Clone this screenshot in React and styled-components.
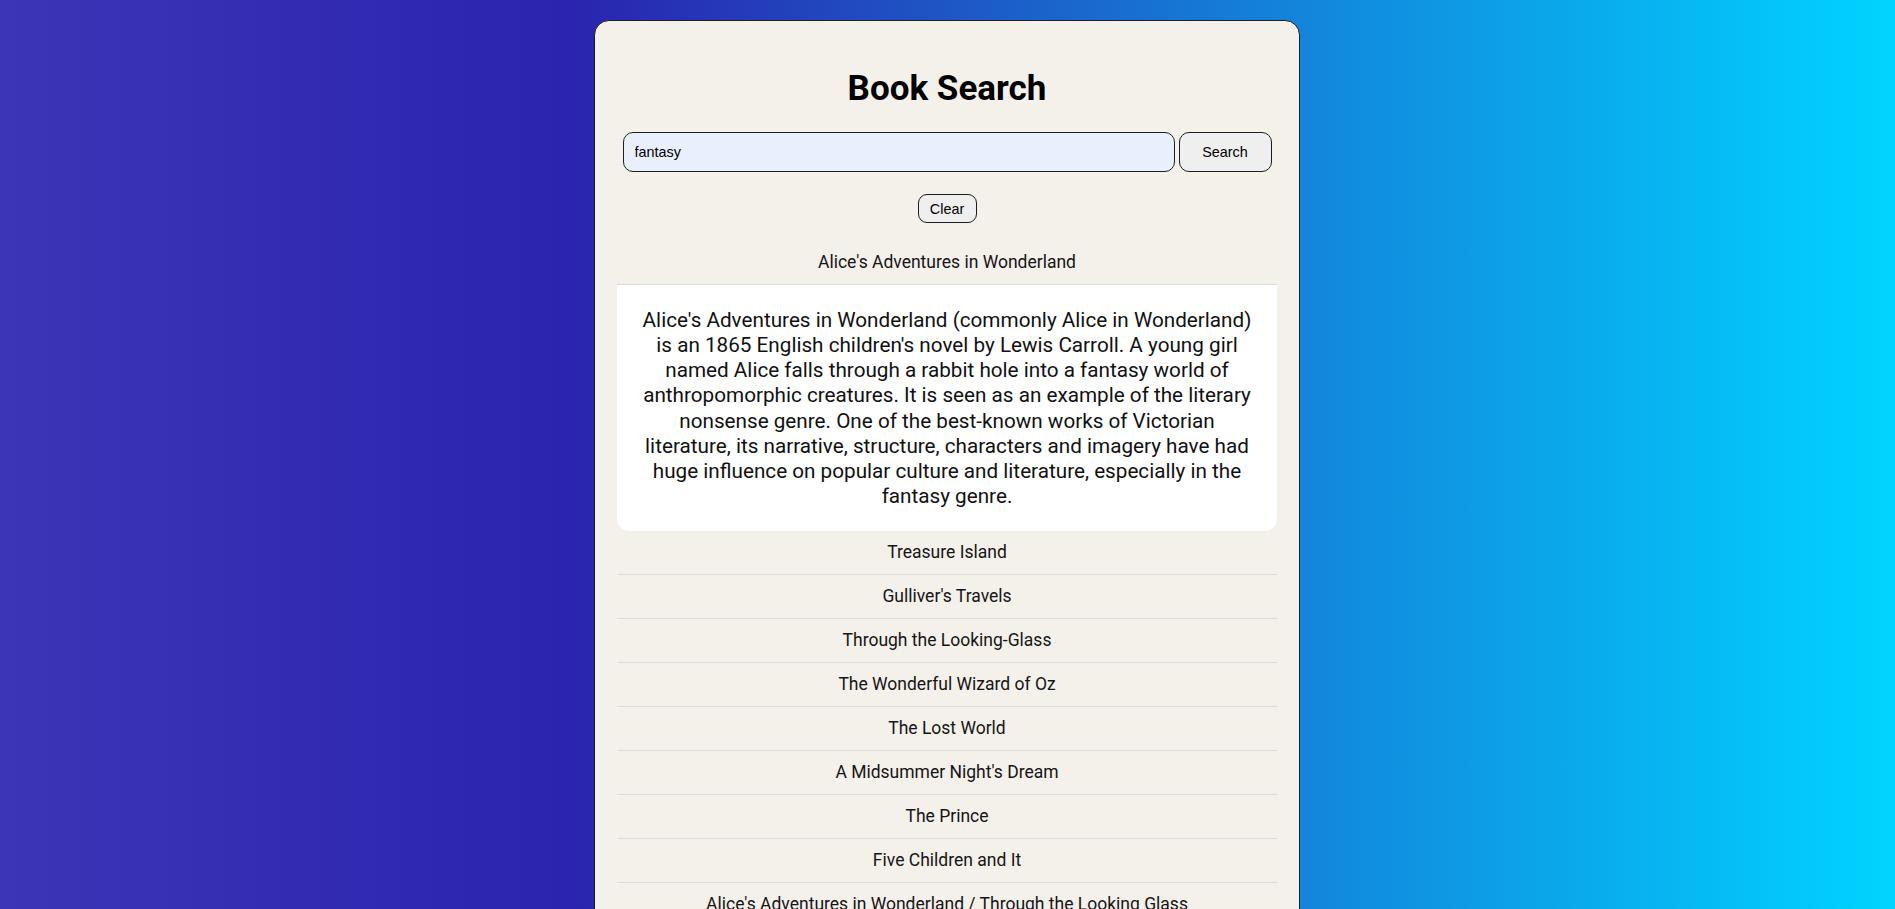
import React, { useState } from "react";
import styled, { createGlobalStyle } from "styled-components";

const GlobalStyle = createGlobalStyle`
  html, body {
    margin: 0;
    padding: 0;
  }
  body {
    min-height: 100vh;
    background: linear-gradient(90deg, #3d35b7 0%, #2a24af 30%, #00d4ff 100%);
    background-attachment: fixed;
    font-family: Roboto, "Liberation Sans", Arial, sans-serif;
    color: #111;
  }
`;

const Page = styled.div`
  display: flex;
  justify-content: center;
  padding: 20px 1px 0 0;
`;

const Card = styled.main`
  width: 660px;
  background: #f4f0ea;
  border: 1px solid #1e1e1e;
  border-radius: 15px;
  padding: 47px 22px 20px;
  display: flex;
  flex-direction: column;
`;

const Title = styled.h1`
  margin: 0 0 23px;
  font-size: 35px;
  font-weight: 700;
  line-height: 41px;
  text-align: center;
  color: #000;
`;

const SearchForm = styled.form`
  width: 649px;
  margin: 0 auto;
  display: flex;
  gap: 4px;
  height: 40px;
`;

const SearchInput = styled.input`
  flex: 1;
  min-width: 0;
  box-sizing: border-box;
  height: 40px;
  padding: 0 11px;
  border: 1px solid #1e1e1e;
  border-radius: 10px;
  background: #e8f0fe;
  font-family: "Liberation Sans", Arial, sans-serif;
  font-size: 14.4px;
  color: #000;
  outline: none;
`;

const Button = styled.button`
  box-sizing: border-box;
  background: #efefef;
  border: 1px solid #1e1e1e;
  border-radius: ${(p) => (p.$small ? "9px" : "10px")};
  font-family: "Liberation Sans", Arial, sans-serif;
  font-size: 14.4px;
  color: #000;
  cursor: pointer;
  width: ${(p) => (p.$small ? "59px" : "93px")};
  height: ${(p) => (p.$small ? "29px" : "40px")};
  padding: 0;
`;

const ClearRow = styled.div`
  display: flex;
  justify-content: center;
  margin: 22px 0 18px;
`;

const List = styled.ul`
  list-style: none;
  margin: 0;
  padding: 0;
`;

const Item = styled.li`
  display: flex;
  flex-direction: column;
`;

const ItemTitle = styled.div`
  padding: 11px 10px;
  font-size: 17.5px;
  line-height: 21px;
  text-align: center;
  color: #151515;
  border-bottom: 1px solid #dcdcdc;
  cursor: pointer;
`;

const Description = styled.div`
  background: #fff;
  border-radius: 0 0 12px 12px;
  padding: 23px 20px 22px;
  font-size: 20.7px;
  line-height: 25.14px;
  text-align: center;
  color: #111;
`;

const books = [
  {
    title: "Alice's Adventures in Wonderland",
    description:
      "Alice's Adventures in Wonderland (commonly Alice in Wonderland) is an 1865 English children's novel by Lewis Carroll. A young girl named Alice falls through a rabbit hole into a fantasy world of anthropomorphic creatures. It is seen as an example of the literary nonsense genre. One of the best-known works of Victorian literature, its narrative, structure, characters and imagery have had huge influence on popular culture and literature, especially in the fantasy genre.",
  },
  { title: "Treasure Island" },
  { title: "Gulliver's Travels" },
  { title: "Through the Looking-Glass" },
  { title: "The Wonderful Wizard of Oz" },
  { title: "The Lost World" },
  { title: "A Midsummer Night's Dream" },
  { title: "The Prince" },
  { title: "Five Children and It" },
  { title: "Alice's Adventures in Wonderland / Through the Looking Glass" },
  { title: "Peter Pan" },
  { title: "The Jungle Book" },
];

export default function App() {
  const [query, setQuery] = useState("fantasy");
  const [open, setOpen] = useState(0);

  return (
    <>
      <GlobalStyle />
      <Page>
        <Card>
          <Title>Book Search</Title>
          <SearchForm onSubmit={(e) => e.preventDefault()}>
            <SearchInput value={query} onChange={(e) => setQuery(e.target.value)} />
            <Button type="submit">Search</Button>
          </SearchForm>
          <ClearRow>
            <Button $small type="button" onClick={() => setQuery("")}>
              Clear
            </Button>
          </ClearRow>
          <List>
            {books.map((b, i) => (
              <Item key={b.title}>
                <ItemTitle onClick={() => setOpen(open === i ? -1 : i)}>{b.title}</ItemTitle>
                {open === i && b.description && <Description>{b.description}</Description>}
              </Item>
            ))}
          </List>
        </Card>
      </Page>
    </>
  );
}
